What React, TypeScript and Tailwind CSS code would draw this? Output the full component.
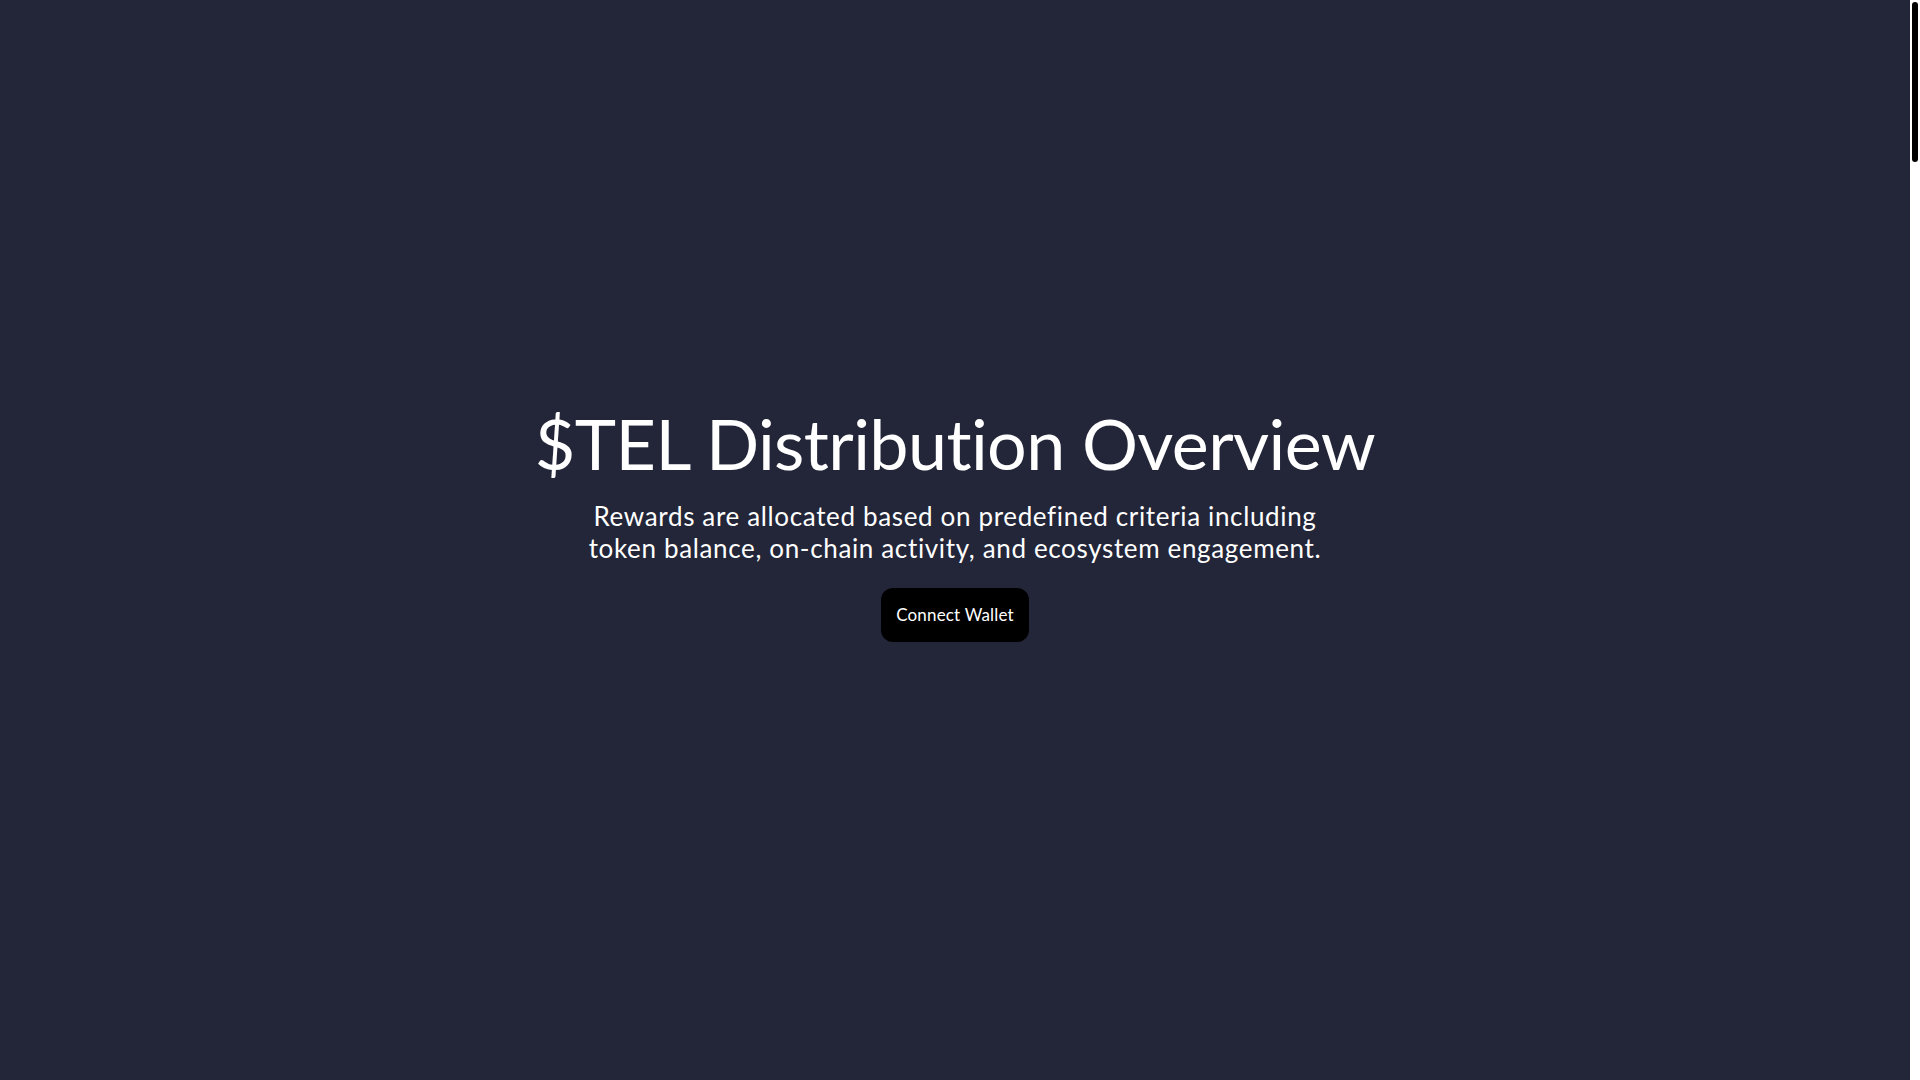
export default function App() {
  return (
    <div
      className="flex h-screen w-full bg-[#232538] text-white"
      style={{ fontFamily: "Lato, 'Noto Sans', sans-serif" }}
    >
      <main className="flex min-w-0 flex-1 flex-col items-center justify-center pb-[30px]">
        <h1 className="text-[70px] leading-none font-normal tracking-[-0.6px]">
          $TEL Distribution Overview
        </h1>
        <p className="mt-[22px] max-w-[760px] text-center text-[26px] leading-8 tracking-[0.025em]">
          Rewards are allocated based on predefined criteria including token balance, on-chain activity, and ecosystem engagement.
        </p>
        <button className="mt-6 rounded-xl bg-black px-[15px] py-[15px] text-[17px] leading-6 tracking-[0.01em] text-white">
          Connect Wallet
        </button>
      </main>
      {/* page scroll strip */}
      <aside className="w-[10px] shrink-0 bg-white pt-[2px]">
        <div className="mx-[2px] h-[160px] rounded-full bg-black" />
      </aside>
    </div>
  );
}
